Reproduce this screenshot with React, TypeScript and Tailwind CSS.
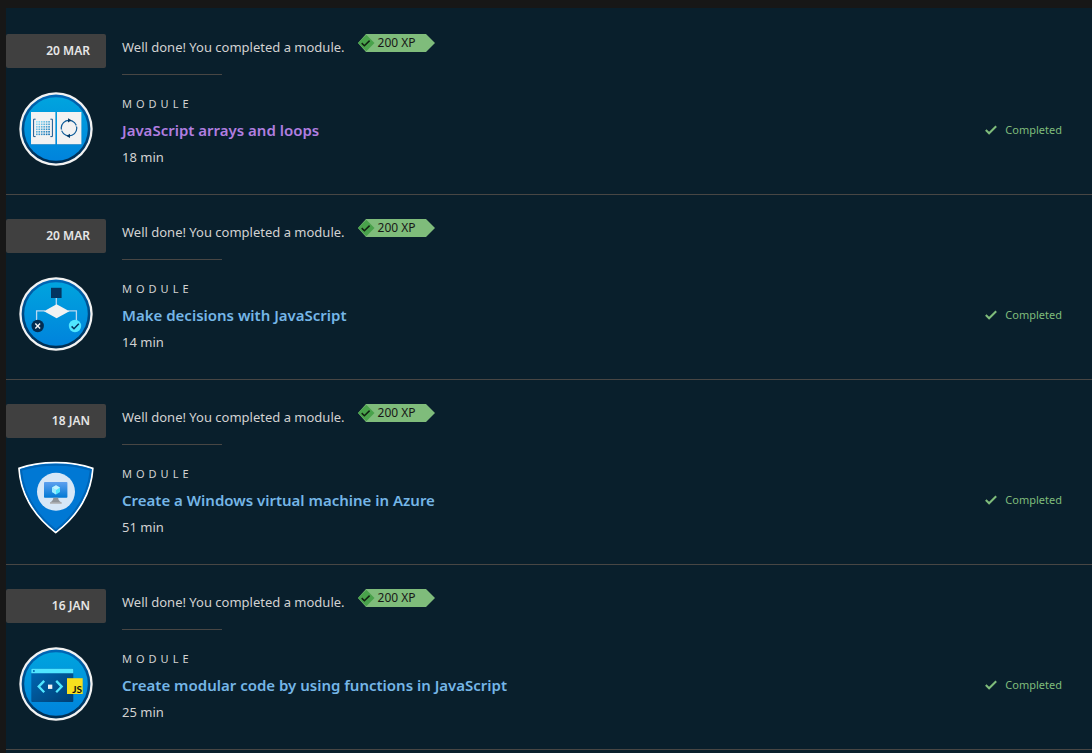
import React from "react";

type IconName = "arrays" | "decisions" | "machine" | "functions";

interface Activity {
  date: string;
  title: string;
  minutes: number;
  icon: IconName;
  visited?: boolean;
}

const activities: Activity[] = [
  { date: "20 MAR", title: "JavaScript arrays and loops", minutes: 18, icon: "arrays", visited: true },
  { date: "20 MAR", title: "Make decisions with JavaScript", minutes: 14, icon: "decisions" },
  { date: "18 JAN", title: "Create a Windows virtual machine in Azure", minutes: 51, icon: "machine" },
  { date: "16 JAN", title: "Create modular code by using functions in JavaScript", minutes: 25, icon: "functions" },
];

function Medal({ id, children }: { id: string; children: React.ReactNode }) {
  return (
    <svg width="76" height="76" viewBox="0 0 76 76" aria-hidden="true">
      <defs>
        <linearGradient id={id + "-face"} x1="0" y1="0" x2="0" y2="1">
          <stop offset="0" stopColor="#00a4de" />
          <stop offset="1" stopColor="#0083dc" />
        </linearGradient>
        <linearGradient id={id + "-rim"} x1="0" y1="0" x2="0" y2="1">
          <stop offset="0" stopColor="#0067b8" />
          <stop offset="1" stopColor="#002c50" />
        </linearGradient>
      </defs>
      <circle cx="38" cy="38" r="36.7" fill="#f2f2f2" />
      <circle cx="38" cy="38" r="34.4" fill={`url(#${id}-rim)`} />
      <circle cx="38" cy="38" r="31.8" fill={`url(#${id}-face)`} />
      {children}
    </svg>
  );
}

function ArraysIcon() {
  const steps = [0, 1, 2, 3, 4, 5];
  return (
    <Medal id="arrays">
      <defs>
        <linearGradient id="cells" gradientUnits="userSpaceOnUse" x1="18" y1="30" x2="32" y2="45">
          <stop offset="0" stopColor="#9cebff" />
          <stop offset="1" stopColor="#0060a8" />
        </linearGradient>
      </defs>
      <path d="M13 21.7h24.4V54H13zM39 21.7h24.4V54H39z" fill="#0067ae" opacity=".5" />
      <path d="M13 21h24.4v32.2H13zM39 21h24.4v32.2H39z" fill="#f2f2f2" />
      <path d="M17.6 28.2h-2v17.4h2M32.4 28.2h2v17.4h-2" fill="none" stroke="#17568f" strokeWidth="1" />
      {steps.map((r) =>
        steps.map((c) => (
          <rect key={`${r}-${c}`} x={18 + c * 2.45} y={30 + r * 2.5} width="1.6" height="1.6" fill="url(#cells)" />
        )),
      )}
      <circle cx="51" cy="37.1" r="7.8" fill="none" stroke="#0b5a98" strokeWidth="1.2" />
      <path d="M42.6 38.6h2v1.2h-2zM57.6 34.2h2v1.2h-2z" fill="#f2f2f2" />
      <path d="M50 27.2l3.6 2.1-3.6 2.1zM52 42.8l-3.6 2.1 3.6 2.1z" fill="#073a66" />
    </Medal>
  );
}

function DecisionsIcon() {
  return (
    <Medal id="decisions">
      <path d="M38.3 21v8M27 34.9h-8.4V45M50 34.9h8.4V45" fill="none" stroke="#b9d8f2" strokeWidth="1.3" />
      <path d="M33 11.8h10.6V22H33z" fill="#033460" />
      <path d="M38.6 28.2L51.4 35.2 38.6 42.2 26 35.2z" fill="#f2f2f2" />
      <circle cx="19.7" cy="50" r="6.2" fill="#032c50" />
      <path d="M17.3 47.6l4.8 4.8M22.1 47.6l-4.8 4.8" stroke="#f2f2f2" strokeWidth="1.4" />
      <circle cx="57" cy="50" r="6.2" fill="#50e6ff" />
      <path d="M53.6 50.4l2.4 2.4 4.8-5" fill="none" stroke="#033460" strokeWidth="1.5" />
    </Medal>
  );
}

function MachineIcon() {
  return (
    <svg width="76" height="76" viewBox="0 0 76 76" aria-hidden="true">
      <defs>
        <linearGradient id="screen" x1="0" y1="0" x2="0" y2="1">
          <stop offset="0" stopColor="#5ea0ef" />
          <stop offset="1" stopColor="#0078d4" />
        </linearGradient>
      </defs>
      <path
        d="M1 7.4C12 3.4 24.5 1.7 37.8 1.7S63.5 3.4 74.8 7.4C73.6 31 61 54 37.7 71.5 14.5 54 2.2 31 1 7.4z"
        fill="#0078d4"
        stroke="#fff"
        strokeWidth="1.7"
      />
      <path d="M3 8.9C24 2 52 2 72.8 8.9 70.5 31 59.5 52 37.7 69.2 16 52 5 31 3 8.9z" fill="none" stroke="#0064b5" strokeWidth="1.8" />
      <circle cx="38" cy="30.7" r="19" fill="#d6e7f7" />
      <rect x="26" y="21" width="23.4" height="15.8" rx="0.8" fill="url(#screen)" />
      <path d="M35.3 36.8h4.9c0 2 .8 3.4 3.3 4.6v1.2H32v-1.2c2.5-1.2 3.3-2.6 3.3-4.6z" fill="#8f9499" />
      <path d="M32 41.4h11.6v1.3H32z" fill="#b8babd" />
      <path d="M38 24.3l4 2.3v4.5l-4 2.3-4-2.3v-4.5z" fill="#50e6ff" />
      <path d="M38 24.3l4 2.3-4 2.4-4-2.4z" fill="#c3f1ff" />
      <path d="M34 26.6l4 2.4v4.4l-4-2.3z" fill="#9cebff" />
    </svg>
  );
}

function FunctionsIcon() {
  return (
    <Medal id="functions">
      <defs>
        <linearGradient id="window" x1="0" y1="0" x2="1" y2="1">
          <stop offset="0" stopColor="#0069b5" />
          <stop offset="1" stopColor="#003e73" />
        </linearGradient>
      </defs>
      <rect x="13.3" y="22.7" width="42" height="33.2" rx="1" fill="url(#window)" />
      <path d="M13.3 27.2v-3.5a1 1 0 0 1 1-1h40a1 1 0 0 1 1 1v3.5z" fill="#50e6ff" />
      <circle cx="15.9" cy="25" r="1" fill="#0067b0" />
      <path d="M26.2 34.9l-5.5 5.7 5.5 5.7M38.2 34.9l5.5 5.7-5.5 5.7" fill="none" stroke="#50e6ff" strokeWidth="2.3" />
      <path d="M30 38.6h4.3v4.3H30z" fill="#f2f2f2" />
      <path d="M49 32.2h15.7V48H49z" fill="#f7df1e" />
      <text x="64" y="47" textAnchor="end" fontSize="10" fontWeight="700" fontFamily="Lato, sans-serif" fill="#101010">
        JS
      </text>
    </Medal>
  );
}

const icons: Record<IconName, () => React.ReactElement> = {
  arrays: ArraysIcon,
  decisions: DecisionsIcon,
  machine: MachineIcon,
  functions: FunctionsIcon,
};

function XpTag() {
  return (
    <span className="grid h-[18px] w-[77px] shrink-0 text-[12px] leading-[18px] text-[#171717]">
      <svg className="col-start-1 row-start-1" width="77" height="18" viewBox="0 0 77 18" aria-hidden="true">
        <path d="M8 0h60l9 9-9 9H8L0 9z" fill="#7fbc7b" />
        <path d="M8.3 0.8L16.5 9l-8.2 8.2L0 9z" fill="#49a24b" />
        <path d="M3.7 9.1l2.7 2.7 5.2-5.2" fill="none" stroke="#102010" strokeWidth="1.5" />
      </svg>
      <span className="col-start-1 row-start-1 pl-5">200 XP</span>
    </span>
  );
}

function ActivityRow({ activity }: { activity: Activity }) {
  const Icon = icons[activity.icon];
  return (
    <li className="flex gap-4 border-b border-[#484644] pt-6 pb-[27px]">
      <div className="flex w-[100px] shrink-0 flex-col items-center gap-[23px]">
        <time className="w-full rounded-[2px] bg-[#404040] pr-4 text-right text-[12px] leading-[34px] font-semibold text-[#e6e6e6]">
          {activity.date}
        </time>
        <Icon />
      </div>
      <div className="min-w-0 flex-1">
        <div className="flex items-start gap-[13px]">
          <p className="text-[13px] leading-[26px]">Well done! You completed a module.</p>
          <XpTag />
        </div>
        <hr className="mt-[14px] w-[100px] border-[#484644]" />
        <p className="mt-[21px] text-[11px] leading-4 tracking-[4px] uppercase">Module</p>
        <div className="mt-1.5 flex items-center justify-between pr-[30px]">
          <h3 className="text-[15px] leading-6 font-semibold">
            <a href="#" className={activity.visited ? "text-[#b17ee0]" : "text-[#75b6e7]"}>
              {activity.title}
            </a>
          </h3>
          <span className="flex items-center gap-2 text-[11px] leading-6 text-[#7fbc7b]">
            <svg width="12" height="10" viewBox="0 0 12 10" aria-hidden="true">
              <path d="M0.8 5l3.3 3.3L11.2 1.2" fill="none" stroke="currentColor" strokeWidth="2" />
            </svg>
            Completed
          </span>
        </div>
        <p className="mt-[5px] text-[13px] leading-5">{activity.minutes} min</p>
      </div>
    </li>
  );
}

export default function App() {
  return (
    <div className="min-h-screen bg-[#171717] pt-2 pl-1.5 font-['Noto_Sans',sans-serif] text-[#d2d2d2]">
      <main className="min-h-[calc(100vh-8px)] bg-[#091f2c] pt-0.5">
        <ul>
          {activities.map((activity) => (
            <ActivityRow key={activity.title} activity={activity} />
          ))}
        </ul>
      </main>
    </div>
  );
}
